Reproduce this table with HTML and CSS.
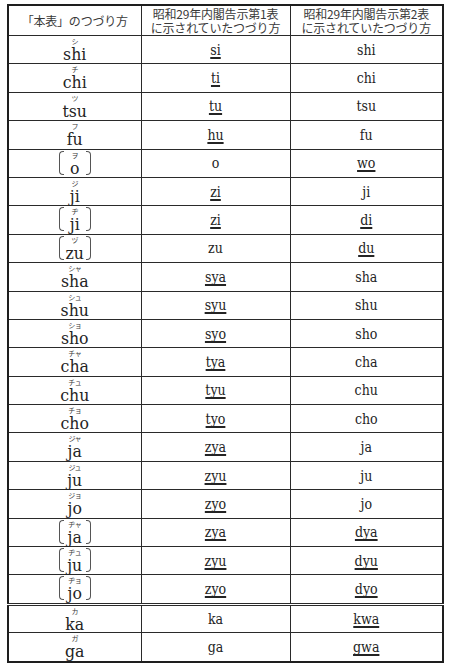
FILE: index.html
```html
<!DOCTYPE html>
<html lang="ja">
<head>
<meta charset="utf-8">
<title>つづり方対照表</title>
<link rel="stylesheet" href="styles.css">
</head>
<body>
<table class="tbl">
  <colgroup><col class="c1"><col class="c2"><col class="c3"></colgroup>
  <thead>
    <tr class="head">
      <th>「本表」のつづり方</th>
      <th>昭和29年内閣告示第1表<br>に示されていたつづり方</th>
      <th>昭和29年内閣告示第2表<br>に示されていたつづり方</th>
    </tr>
  </thead>
  <tbody>
    <tr><td class="k"><span class="rb"><span class="kana">シ</span><span class="ro">shi</span></span></td><td><u>si</u></td><td>shi</td></tr>
    <tr><td class="k"><span class="rb"><span class="kana">チ</span><span class="ro">chi</span></span></td><td><u>ti</u></td><td>chi</td></tr>
    <tr><td class="k"><span class="rb"><span class="kana">ツ</span><span class="ro">tsu</span></span></td><td><u>tu</u></td><td>tsu</td></tr>
    <tr><td class="k"><span class="rb"><span class="kana">フ</span><span class="ro">fu</span></span></td><td><u>hu</u></td><td>fu</td></tr>
    <tr><td class="k"><span class="rb br"><span class="kana">ヲ</span><span class="ro">o</span></span></td><td>o</td><td><u>wo</u></td></tr>
    <tr><td class="k"><span class="rb"><span class="kana">ジ</span><span class="ro">ji</span></span></td><td><u>zi</u></td><td>ji</td></tr>
    <tr><td class="k"><span class="rb br"><span class="kana">ヂ</span><span class="ro">ji</span></span></td><td><u>zi</u></td><td><u>di</u></td></tr>
    <tr><td class="k"><span class="rb br"><span class="kana">ヅ</span><span class="ro">zu</span></span></td><td>zu</td><td><u>du</u></td></tr>
    <tr><td class="k"><span class="rb"><span class="kana">シャ</span><span class="ro">sha</span></span></td><td><u>sya</u></td><td>sha</td></tr>
    <tr><td class="k"><span class="rb"><span class="kana">シュ</span><span class="ro">shu</span></span></td><td><u>syu</u></td><td>shu</td></tr>
    <tr><td class="k"><span class="rb"><span class="kana">ショ</span><span class="ro">sho</span></span></td><td><u>syo</u></td><td>sho</td></tr>
    <tr><td class="k"><span class="rb"><span class="kana">チャ</span><span class="ro">cha</span></span></td><td><u>tya</u></td><td>cha</td></tr>
    <tr><td class="k"><span class="rb"><span class="kana">チュ</span><span class="ro">chu</span></span></td><td><u>tyu</u></td><td>chu</td></tr>
    <tr><td class="k"><span class="rb"><span class="kana">チョ</span><span class="ro">cho</span></span></td><td><u>tyo</u></td><td>cho</td></tr>
    <tr><td class="k"><span class="rb"><span class="kana">ジャ</span><span class="ro">ja</span></span></td><td><u>zya</u></td><td>ja</td></tr>
    <tr><td class="k"><span class="rb"><span class="kana">ジュ</span><span class="ro">ju</span></span></td><td><u>zyu</u></td><td>ju</td></tr>
    <tr><td class="k"><span class="rb"><span class="kana">ジョ</span><span class="ro">jo</span></span></td><td><u>zyo</u></td><td>jo</td></tr>
    <tr><td class="k"><span class="rb br"><span class="kana">ヂャ</span><span class="ro">ja</span></span></td><td><u>zya</u></td><td><u>dya</u></td></tr>
    <tr><td class="k"><span class="rb br"><span class="kana">ヂュ</span><span class="ro">ju</span></span></td><td><u>zyu</u></td><td><u>dyu</u></td></tr>
    <tr><td class="k"><span class="rb br"><span class="kana">ヂョ</span><span class="ro">jo</span></span></td><td><u>zyo</u></td><td><u>dyo</u></td></tr>
    <tr class="sep"><td class="k"><span class="rb"><span class="kana">カ</span><span class="ro">ka</span></span></td><td>ka</td><td><u>kwa</u></td></tr>
    <tr><td class="k"><span class="rb"><span class="kana">ガ</span><span class="ro">ga</span></span></td><td>ga</td><td><u>gwa</u></td></tr>
  </tbody>
</table>
</body>
</html>
```
FILE: styles.css
```css
html, body {
  margin: 0;
  padding: 0;
  background: #ffffff;
}

body {
  padding: 4px 0 0 7px;
  font-family: "DejaVu Serif Condensed", "DejaVu Serif", "Noto Sans CJK JP", serif;
  font-stretch: condensed;
  color: #242424;
}

.tbl {
  border-collapse: collapse;
  table-layout: fixed;
  width: 435px;
  border: 2px solid #1e1e1e;
}

.c1 { width: 133px; }
.c2 { width: 149px; }
.c3 { width: 153px; }

.tbl th,
.tbl td {
  border: 1px solid #2a2a2a;
  padding: 0;
  text-align: center;
  vertical-align: middle;
}

.head th {
  height: 29px;
  font-family: "Noto Sans CJK JP", sans-serif;
  font-weight: normal;
  font-size: 12px;
  line-height: 14px;
  color: #3a3a3a;
  letter-spacing: -0.2px;
}

.tbl tbody td {
  height: 27.4px;
  font-size: 14px;
  line-height: 16px;
}

.tbl tbody td.k {
  vertical-align: top;
}

.tbl u {
  text-decoration-thickness: 1.5px;
  text-underline-offset: 2px;
  text-decoration-skip-ink: none;
}

.tbl tr.sep td {
  border-top: 3px double #2a2a2a;
  height: 26.4px;
}

.rb {
  position: relative;
  display: flex;
  flex-direction: column;
  align-items: center;
  width: 32px;
  height: 25px;
  margin: 0 auto;
  padding-top: 1px;
  box-sizing: border-box;
}

.kana {
  display: block;
  font-family: "Noto Sans CJK JP", sans-serif;
  font-size: 7px;
  line-height: 9px;
  height: 9px;
  color: #3a3a3a;
  letter-spacing: -0.5px;
}

.ro {
  display: block;
  margin-top: 1px;
  font-size: 17.5px;
  line-height: 14px;
  height: 14px;
}

.br::before,
.br::after {
  content: "";
  position: absolute;
  top: 1px;
  bottom: 0;
  width: 4px;
  border: 1.5px solid #555;
}

.br::before {
  left: 0;
  border-right: none;
  border-radius: 4px 0 0 4px;
}

.br::after {
  right: 0;
  border-left: none;
  border-radius: 0 4px 4px 0;
}
```
